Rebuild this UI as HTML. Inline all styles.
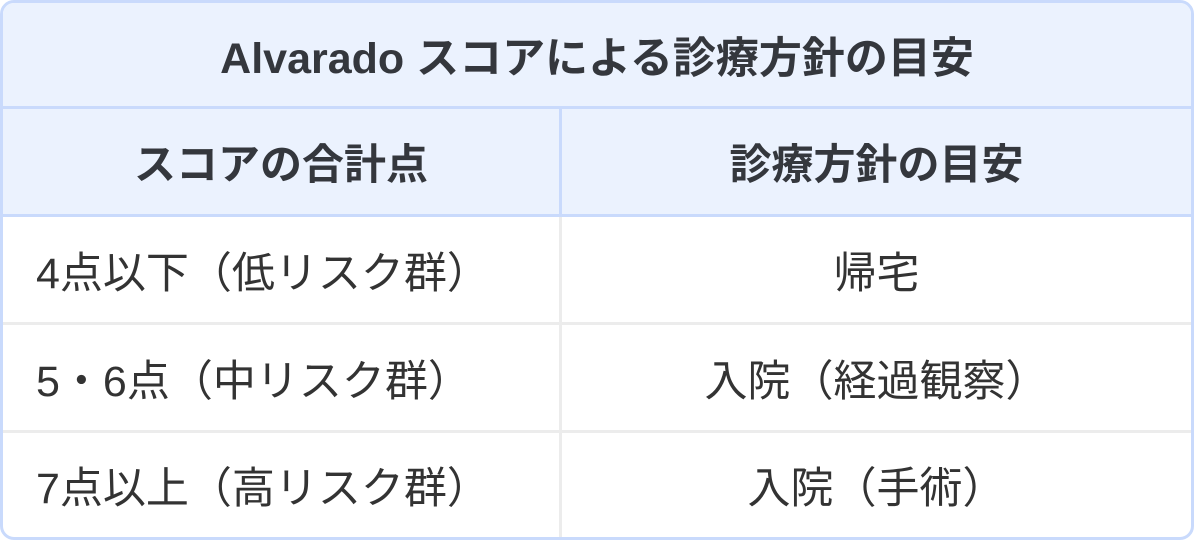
<!DOCTYPE html>
<html><head><meta charset="utf-8"><style>
body{margin:0;width:1194px;height:540px;background:#fff;font-family:"Liberation Sans","Noto Sans CJK JP",sans-serif;color:#333;}
.t{position:absolute;left:0;top:0;width:1188px;height:534px;border:3px solid #c9dafc;border-radius:14px;overflow:hidden;}
.r{position:absolute;left:0;width:1188px;display:flex;align-items:center;}
.c{display:flex;align-items:center;height:100%;box-sizing:border-box;}
</style></head><body>
<div class="t">
 <div class="r" style="top:0;height:103px;background:#ebf2fe;border-bottom:3px solid #c9dafc;justify-content:center;font-size:43px;font-weight:bold;color:#34373d;">Alvarado スコアによる診療方針の目安</div>
 <div class="r" style="top:106px;height:105px;background:#ebf2fe;border-bottom:3px solid #c9dafc;font-size:42px;font-weight:bold;color:#34373d;">
  <div class="c" style="width:559px;justify-content:center;border-right:3px solid #c9dafc;">スコアの合計点</div>
  <div class="c" style="flex:1;justify-content:center;">診療方針の目安</div>
 </div>
 <div class="r" style="top:214px;height:105px;border-bottom:3px solid #ececec;font-size:43px;">
  <div class="c" style="width:559px;padding-left:33px;border-right:3px solid #ececec;">4点以下（低リスク群）</div>
  <div class="c" style="flex:1;justify-content:center;">帰宅</div>
 </div>
 <div class="r" style="top:322px;height:105px;border-bottom:3px solid #ececec;font-size:43px;">
  <div class="c" style="width:559px;padding-left:33px;border-right:3px solid #ececec;">5・6点（中リスク群）</div>
  <div class="c" style="flex:1;justify-content:center;">入院（経過観察）</div>
 </div>
 <div class="r" style="top:430px;height:104px;font-size:43px;">
  <div class="c" style="width:559px;padding-left:33px;border-right:3px solid #ececec;">7点以上（高リスク群）</div>
  <div class="c" style="flex:1;justify-content:center;">入院（手術）</div>
 </div>
</div>
</body></html>
